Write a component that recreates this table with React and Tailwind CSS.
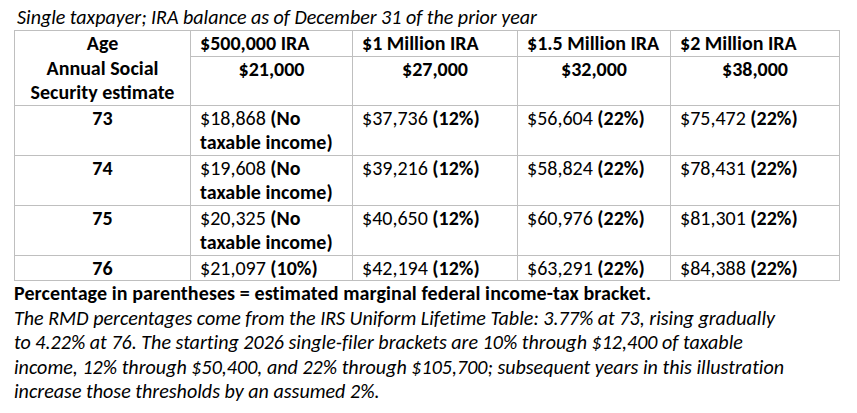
import React from "react";

const font = { fontFamily: "Carlito, Calibri, Lato, 'Liberation Sans', sans-serif" };

const rows = [
  { age: "73", c: [["$18,868", " (No", "taxable income)"], ["$37,736", " (12%)"], ["$56,604", " (22%)"], ["$75,472", " (22%)"]] },
  { age: "74", c: [["$19,608", " (No", "taxable income)"], ["$39,216", " (12%)"], ["$58,824", " (22%)"], ["$78,431", " (22%)"]] },
  { age: "75", c: [["$20,325", " (No", "taxable income)"], ["$40,650", " (12%)"], ["$60,976", " (22%)"], ["$81,301", " (22%)"]] },
  { age: "76", c: [["$21,097", " (10%)"], ["$42,194", " (12%)"], ["$63,291", " (22%)"], ["$84,388", " (22%)"]] },
];

const cell = "border-r border-b border-[#bfbfbf]";

export default function App() {
  return (
    <div className="w-[857px] h-[413px] bg-white text-black pl-[14px] pt-[5px] text-[20px] leading-[24.5px] overflow-hidden" style={font}>
      <div className="italic leading-[25px] pl-[3px] whitespace-nowrap">
        Single taxpayer; IRA balance as of December 31 of the prior year
      </div>
      <div className="grid grid-cols-[176px_162px_165px_153px_169px] w-[826px] border-l border-t border-[#bfbfbf] whitespace-nowrap">
        <div className={`${cell} row-span-2 font-bold text-center`}>
          <div>Age</div>
          <div>Annual Social</div>
          <div>Security estimate</div>
        </div>
        <div className={`${cell} font-bold pl-[9px]`}>$500,000 IRA</div>
        <div className={`${cell} font-bold pl-[9px]`}>$1 Million IRA</div>
        <div className={`${cell} font-bold pl-[9px]`}>$1.5 Million IRA</div>
        <div className={`${cell} font-bold pl-[9px]`}>$2 Million IRA</div>
        <div className={`${cell} font-bold text-center h-[49px]`}>$21,000</div>
        <div className={`${cell} font-bold text-center`}>$27,000</div>
        <div className={`${cell} font-bold text-center`}>$32,000</div>
        <div className={`${cell} font-bold text-center`}>$38,000</div>
        {rows.map((r) => (
          <React.Fragment key={r.age}>
            <div className={`${cell} font-bold text-center`}>{r.age}</div>
            {r.c.map((v, i) => (
              <div key={i} className={`${cell} pl-[9px]`}>
                <div>
                  {v[0]}
                  <span className="font-bold">{v[1]}</span>
                </div>
                {v[2] && <div className="font-bold">{v[2]}</div>}
              </div>
            ))}
          </React.Fragment>
        ))}
      </div>
      <div className="font-bold whitespace-nowrap tracking-[0.1px]">
        Percentage in parentheses = estimated marginal federal income-tax bracket.
      </div>
      <div className="italic whitespace-nowrap tracking-[0.03px]">
        <div>The RMD percentages come from the IRS Uniform Lifetime Table: 3.77% at 73, rising gradually</div>
        <div>to 4.22% at 76. The starting 2026 single-filer brackets are 10% through $12,400 of taxable</div>
        <div>income, 12% through $50,400, and 22% through $105,700; subsequent years in this illustration</div>
        <div>increase those thresholds by an assumed 2%.</div>
      </div>
    </div>
  );
}
